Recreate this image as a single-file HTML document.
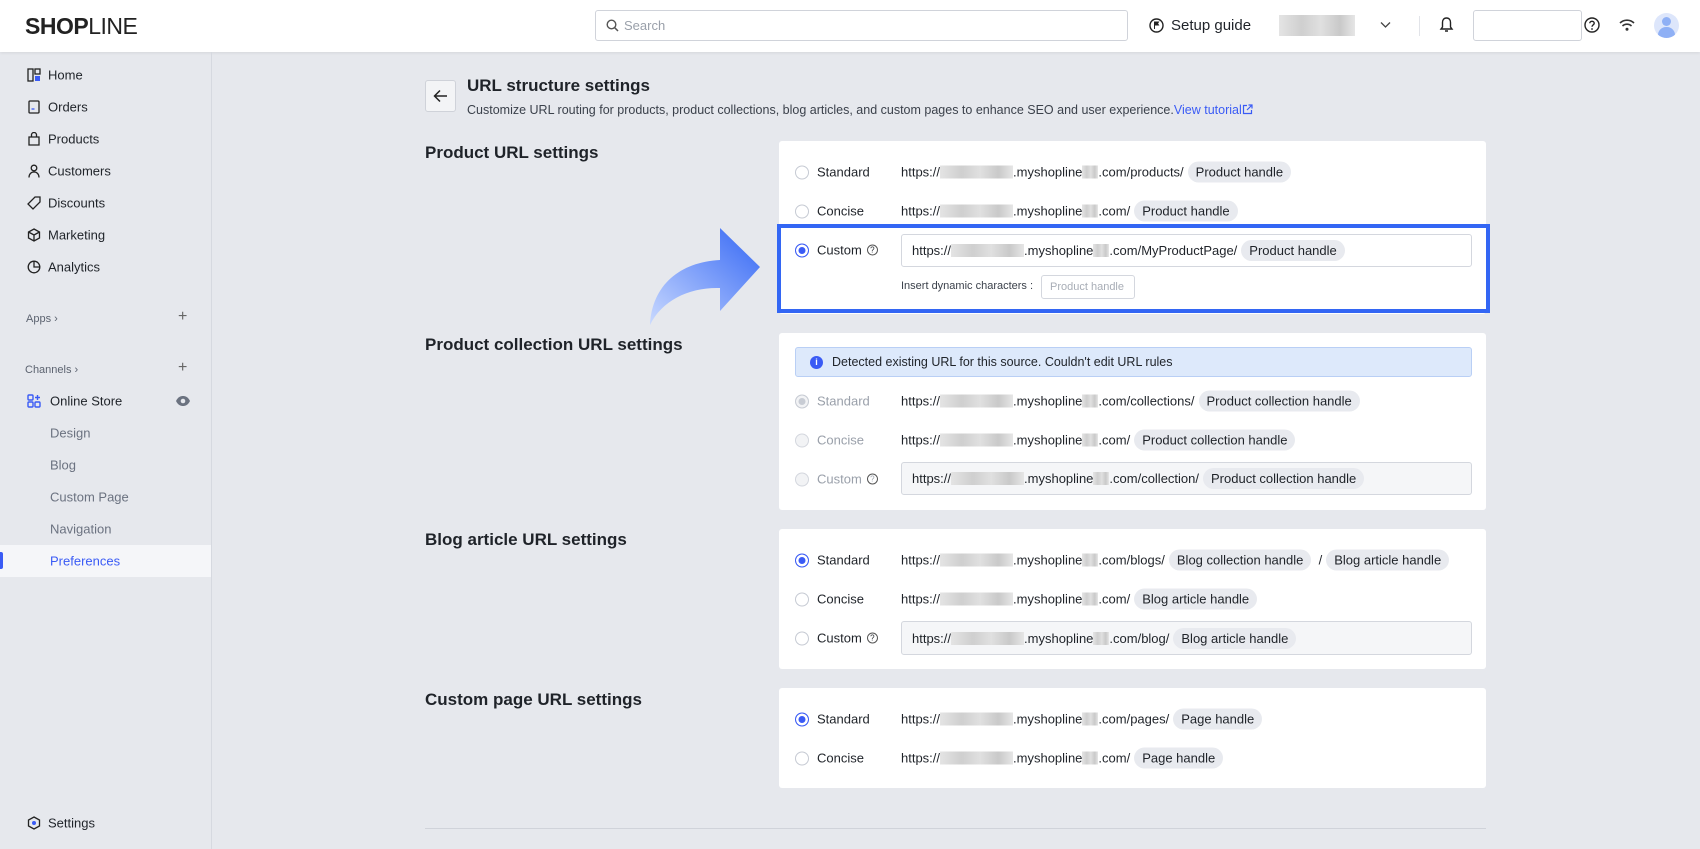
<!DOCTYPE html>
<html><head><meta charset="utf-8"><style>
*{box-sizing:border-box;margin:0;padding:0}
body{width:1700px;height:849px;overflow:hidden;background:#e6e8ed;font-family:"Liberation Sans",sans-serif;color:#1f2329;position:relative;font-size:13px}
.a{position:absolute}
.hdr{left:0;top:0;width:1700px;height:52px;background:#fff;box-shadow:0 1px 3px rgba(0,0,0,.08)}
.side{left:0;top:52px;width:212px;height:797px;border-right:1px solid #d6d9e0}
.nav{position:absolute;left:48px;font-size:13px;color:#1f2329;transform:translateY(-50%)}
.ic{position:absolute;left:27px;width:14px;height:14px;transform:translateY(-50%)}
.sub{position:absolute;left:50px;color:#6b7280;transform:translateY(-50%)}
.card{position:absolute;left:779px;width:707px;background:#fff;border-radius:3px}
.st{position:absolute;left:425px;font-size:17px;font-weight:bold;transform:translateY(-50%)}
.row{position:absolute;left:795px;display:flex;align-items:center;transform:translateY(-50%);white-space:nowrap}
.rd{width:14px;height:14px;border:1px solid #c6cad3;border-radius:50%;margin-right:8px;display:inline-block;background:#fff}
.rd.on{border:1.5px solid #3a5bf5;box-shadow:inset 0 0 0 2.5px #fff;background:#3a5bf5}
.rd.dis{background:#f2f3f5;border-color:#d4d7de}
.rd.dison{border-color:#c8ccd4;background:#c8ccd4;box-shadow:inset 0 0 0 2.5px #f2f3f5}
.lb{width:84px;display:inline-flex;align-items:center;gap:5px}
.q{display:inline-block;width:11px;height:11px;border:1px solid #555;border-radius:50%;font-size:8px;line-height:9px;text-align:center}
.bl{display:inline-block;height:13px;background:linear-gradient(90deg,#e4e4e4,#cfcfcf 30%,#e0e0e0 55%,#c9c9c9 80%,#e6e6e6);vertical-align:middle}
.chip{display:inline-block;background:#e8eaef;border-radius:11px;padding:3px 8px;margin-left:4px;font-size:13px}
.inp{position:absolute;left:901px;width:571px;border:1px solid #d4d7de;border-radius:3px;background:#f5f6f8;display:flex;align-items:center;padding-left:10px;white-space:nowrap}
.dis{color:#9aa0aa}
</style></head><body>
<div class="a hdr">
  <div class="a" style="left:25px;top:13px;font-size:23px;font-weight:bold;letter-spacing:-0.5px;color:#222">SHOP<span style="font-weight:normal">LINE</span></div>
  <div class="a" style="left:595px;top:10px;width:533px;height:31px;border:1px solid #d0d3da;border-radius:3px;color:#9aa0aa;padding:7px 0 0 28px;font-size:13px">Search
    <svg class="a" style="left:10px;top:8px" width="13" height="13" viewBox="0 0 13 13"><circle cx="5.5" cy="5.5" r="4.3" fill="none" stroke="#555" stroke-width="1.4"/><path d="M8.7 8.7L12 12" stroke="#555" stroke-width="1.5"/></svg></div>
  <svg class="a" style="left:1149px;top:18px" width="15" height="15" viewBox="0 0 15 15"><circle cx="7.5" cy="7.5" r="6.5" fill="none" stroke="#222" stroke-width="1.4"/><path d="M5.5 11V4h4l-1 1.5 1 1.5h-4" fill="#222" stroke="#222"/></svg>
  <div class="a" style="left:1171px;top:17px;font-size:15px;font-weight:500">Setup guide</div>
  <div class="a bl" style="left:1279px;top:15px;width:76px;height:21px"></div>
  <svg class="a" style="left:1380px;top:21px" width="11" height="8" viewBox="0 0 11 8"><path d="M1 1.5l4.5 4.5 4.5-4.5" fill="none" stroke="#444" stroke-width="1.3"/></svg>
  <div class="a" style="left:1419px;top:16px;width:1px;height:20px;background:#e2e4e9"></div>
  <svg class="a" style="left:1439px;top:16px" width="15" height="18" viewBox="0 0 15 18"><path d="M7.5 2C4.8 2 3.5 4 3.5 6.5V11L2 13h11l-1.5-2V6.5C11.5 4 10.2 2 7.5 2zM6 15h3" fill="none" stroke="#222" stroke-width="1.4"/></svg>
  <div class="a" style="left:1473px;top:10px;width:109px;height:31px;border:1px solid #d0d3da;border-radius:3px"></div>
  <svg class="a" style="left:1584px;top:17px" width="16" height="16" viewBox="0 0 16 16"><circle cx="8" cy="8" r="7" fill="none" stroke="#222" stroke-width="1.4"/><path d="M5.8 6.2C5.8 3.7 10.2 3.7 10.2 6.2c0 1.6-2.2 1.8-2.2 3.6" fill="none" stroke="#222" stroke-width="1.4"/><circle cx="8" cy="12" r=".9" fill="#222"/></svg>
  <svg class="a" style="left:1618px;top:18px" width="18" height="14" viewBox="0 0 18 14"><path d="M2 5a10 10 0 0 1 14 0M4.5 8a6.5 6.5 0 0 1 9 0" fill="none" stroke="#333" stroke-width="1.6"/><circle cx="9" cy="11.3" r="1.5" fill="#333"/></svg>
  <div class="a" style="left:1654px;top:13px;width:25px;height:25px;border-radius:50%;background:#dde6fb;overflow:hidden"><div class="a" style="left:8px;top:4px;width:9px;height:9px;border-radius:50%;background:#8fb0f5"></div><div class="a" style="left:4px;top:14px;width:17px;height:12px;border-radius:8px 8px 0 0;background:#8fb0f5"></div></div>
</div>

<div class="a side">
</div>
<svg class="ic" style="top:75px" viewBox="0 0 14 14"><rect x="1" y="1" width="5" height="12" fill="none" stroke="#222" stroke-width="1.3"/><rect x="8" y="1" width="5" height="5" fill="none" stroke="#222" stroke-width="1.3"/><rect x="8" y="8" width="5" height="5" fill="#3a5bf5"/></svg><div class="nav" style="top:75px">Home</div>
<svg class="ic" style="top:107px" viewBox="0 0 14 14"><rect x="2" y="1" width="10" height="12" rx="1" fill="none" stroke="#222" stroke-width="1.3"/><path d="M4.5 9h3" stroke="#3a5bf5" stroke-width="1.3"/></svg><div class="nav" style="top:107px">Orders</div>
<svg class="ic" style="top:139px" viewBox="0 0 14 14"><path d="M2 5h10v8H2zM4.5 5V3a2.5 2.5 0 0 1 5 0v2" fill="none" stroke="#222" stroke-width="1.3"/></svg><div class="nav" style="top:139px">Products</div>
<svg class="ic" style="top:171px" viewBox="0 0 14 14"><circle cx="7" cy="4" r="2.8" fill="none" stroke="#222" stroke-width="1.3"/><path d="M2 13.5c0-3.5 2.2-5.5 5-5.5s5 2 5 5.5" fill="none" stroke="#222" stroke-width="1.3"/></svg><div class="nav" style="top:171px">Customers</div>
<svg class="ic" style="top:203px" viewBox="0 0 14 14"><path d="M8 1h5v5l-7 7-5-5z" fill="none" stroke="#222" stroke-width="1.3"/></svg><div class="nav" style="top:203px">Discounts</div>
<svg class="ic" style="top:235px" viewBox="0 0 14 14"><path d="M7 1l5.5 3v6L7 13 1.5 10V4z M1.5 4L7 7l5.5-3M7 7v6" fill="none" stroke="#222" stroke-width="1.3"/></svg><div class="nav" style="top:235px">Marketing</div>
<svg class="ic" style="top:267px" viewBox="0 0 14 14"><circle cx="7" cy="7" r="5.8" fill="none" stroke="#222" stroke-width="1.3"/><path d="M7 1.2V7h5.8" fill="none" stroke="#222" stroke-width="1.3"/></svg><div class="nav" style="top:267px">Analytics</div>
<div class="a" style="left:26px;top:313px;font-size:11px;color:#5c6370">Apps ›</div><div class="a" style="left:178px;top:308px;font-size:16px;color:#666">+</div>
<div class="a" style="left:25px;top:364px;font-size:11px;color:#5c6370">Channels ›</div><div class="a" style="left:178px;top:359px;font-size:16px;color:#666">+</div>
<svg class="ic" style="top:401px" viewBox="0 0 14 14"><rect x="1" y="1" width="5" height="5" rx="1" fill="none" stroke="#3a5bf5" stroke-width="1.4"/><rect x="1" y="8" width="5" height="5" rx="1" fill="none" stroke="#3a5bf5" stroke-width="1.4"/><rect x="8" y="8" width="5" height="5" rx="1" fill="none" stroke="#3a5bf5" stroke-width="1.4"/><path d="M10.5 1v5M8 3.5h5" stroke="#3a5bf5" stroke-width="1.4"/></svg>
<div class="nav" style="top:401px;left:50px;font-weight:500">Online Store</div>
<svg class="a" style="left:175px;top:395px" width="16" height="12" viewBox="0 0 16 12"><path d="M1 6C3 2 5.5 1 8 1s5 1 7 5c-2 4-4.5 5-7 5S3 10 1 6z" fill="#6b7280"/><circle cx="8" cy="6" r="2.3" fill="#e6e8ed"/></svg>
<div class="sub" style="top:433px">Design</div>
<div class="sub" style="top:465px">Blog</div>
<div class="sub" style="top:497px">Custom Page</div>
<div class="sub" style="top:529px">Navigation</div>
<div class="a" style="left:0;top:545px;width:211px;height:32px;background:#f5f6f9"></div>
<div class="a" style="left:0;top:552px;width:3px;height:17px;background:#3a5bf5;border-radius:0 2px 2px 0"></div>
<div class="sub" style="top:561px;color:#3a5bf5">Preferences</div>
<svg class="ic" style="top:823px" viewBox="0 0 14 14"><path d="M7 1l5.5 3v6L7 13 1.5 10V4z" fill="none" stroke="#222" stroke-width="1.3"/><circle cx="7" cy="7" r="2" fill="#3a5bf5"/></svg><div class="nav" style="top:823px">Settings</div>

<!-- main -->
<div class="a" style="left:425px;top:80px;width:31px;height:32px;border:1px solid #cfd2d9;border-radius:3px;background:#f3f4f6"></div>
<svg class="a" style="left:433px;top:89px" width="15" height="14" viewBox="0 0 15 14"><path d="M14 7H2M7 1.5L1.5 7 7 12.5" fill="none" stroke="#222" stroke-width="1.5"/></svg>
<div class="a" style="left:467px;top:76px;font-size:17px;font-weight:bold">URL structure settings</div>
<div class="a" style="left:467px;top:103px;font-size:12.5px;color:#3b414b">Customize URL routing for products, product collections, blog articles, and custom pages to enhance SEO and user experience.<span style="color:#3a5bf5">View tutorial</span><svg width="11" height="11" viewBox="0 0 11 11" style="vertical-align:-1px"><path d="M5 1.5H1.5v8h8V6M6.5 1H10v3.5M10 1L5 6" fill="none" stroke="#3a5bf5" stroke-width="1.2"/></svg></div>

<div class="st" style="top:153px">Product URL settings</div>
<div class="st" style="top:345px">Product collection URL settings</div>
<div class="st" style="top:540px">Blog article URL settings</div>
<div class="st" style="top:700px">Custom page URL settings</div>

<div class="card" style="top:141px;height:173px"></div>
<div class="card" style="top:333px;height:177px"></div>
<div class="card" style="top:529px;height:140px"></div>
<div class="card" style="top:688px;height:100px"></div>
<div class="a" style="left:425px;top:828px;width:1061px;height:1px;background:#d0d3da"></div>

<!-- card1 -->
<div class="row" style="top:172px"><span class="rd"></span><span class="lb">Standard</span>https://<span class="bl" style="width:73px"></span>.myshopline<span class="bl" style="width:16px"></span>.com/products/<span class="chip">Product handle</span></div>
<div class="row" style="top:211px"><span class="rd"></span><span class="lb">Concise</span>https://<span class="bl" style="width:73px"></span>.myshopline<span class="bl" style="width:16px"></span>.com/<span class="chip">Product handle</span></div>
<div class="row" style="top:250px"><span class="rd on"></span><span class="lb">Custom <span class="q">?</span></span></div>
<div class="inp" style="top:234px;height:33px;background:#fff">https://<span class="bl" style="width:73px"></span>.myshopline<span class="bl" style="width:16px"></span>.com/MyProductPage/<span class="chip">Product handle</span></div>
<div class="a" style="left:901px;top:280px;font-size:11px;color:#3b414b">Insert dynamic characters :</div>
<div class="a" style="left:1041px;top:275px;width:94px;height:24px;border:1px solid #d4d7de;border-radius:3px;font-size:11px;color:#a8adb6;padding:5px 0 0 8px">Product handle</div>

<!-- blue box & arrow -->
<div class="a" style="left:777px;top:224px;width:713px;height:89px;border:4px solid #3366f4"></div>
<svg class="a" style="left:640px;top:225px" width="125" height="105" viewBox="0 0 125 105"><defs><linearGradient id="g" x1="0" y1="1" x2="1" y2="0"><stop offset="0" stop-color="#c9d9ff"/><stop offset="1" stop-color="#3366f4"/></linearGradient></defs><path d="M10 100C12 60 40 37 80 35V3L120 42 80 86V63C50 62 22 75 10 100z" fill="url(#g)"/></svg>

<!-- card2 -->
<div class="a" style="left:795px;top:347px;width:677px;height:30px;background:#dde9fb;border:1px solid #b9cff5;border-radius:3px;display:flex;align-items:center;padding-left:14px;font-size:12.5px"><span style="display:inline-block;width:13px;height:13px;border-radius:50%;background:#3a5bf5;color:#fff;font-size:9px;text-align:center;line-height:13px;font-weight:bold;margin-right:9px">i</span>Detected existing URL for this source. Couldn't edit URL rules</div>
<div class="row" style="top:401px"><span class="rd dison"></span><span class="lb dis">Standard</span>https://<span class="bl" style="width:73px"></span>.myshopline<span class="bl" style="width:16px"></span>.com/collections/<span class="chip">Product collection handle</span></div>
<div class="row" style="top:440px"><span class="rd dis"></span><span class="lb dis">Concise</span>https://<span class="bl" style="width:73px"></span>.myshopline<span class="bl" style="width:16px"></span>.com/<span class="chip">Product collection handle</span></div>
<div class="row" style="top:479px"><span class="rd dis"></span><span class="lb dis">Custom <span class="q">?</span></span></div>
<div class="inp" style="top:462px;height:33px">https://<span class="bl" style="width:73px"></span>.myshopline<span class="bl" style="width:16px"></span>.com/collection/<span class="chip">Product collection handle</span></div>

<!-- card3 -->
<div class="row" style="top:560px"><span class="rd on"></span><span class="lb">Standard</span>https://<span class="bl" style="width:73px"></span>.myshopline<span class="bl" style="width:16px"></span>.com/blogs/<span class="chip">Blog collection handle</span>&nbsp;&nbsp;/<span class="chip">Blog article handle</span></div>
<div class="row" style="top:599px"><span class="rd"></span><span class="lb">Concise</span>https://<span class="bl" style="width:73px"></span>.myshopline<span class="bl" style="width:16px"></span>.com/<span class="chip">Blog article handle</span></div>
<div class="row" style="top:638px"><span class="rd"></span><span class="lb">Custom <span class="q">?</span></span></div>
<div class="inp" style="top:621px;height:34px">https://<span class="bl" style="width:73px"></span>.myshopline<span class="bl" style="width:16px"></span>.com/blog/<span class="chip">Blog article handle</span></div>

<!-- card4 -->
<div class="row" style="top:719px"><span class="rd on"></span><span class="lb">Standard</span>https://<span class="bl" style="width:73px"></span>.myshopline<span class="bl" style="width:16px"></span>.com/pages/<span class="chip">Page handle</span></div>
<div class="row" style="top:758px"><span class="rd"></span><span class="lb">Concise</span>https://<span class="bl" style="width:73px"></span>.myshopline<span class="bl" style="width:16px"></span>.com/<span class="chip">Page handle</span></div>
</body></html>
